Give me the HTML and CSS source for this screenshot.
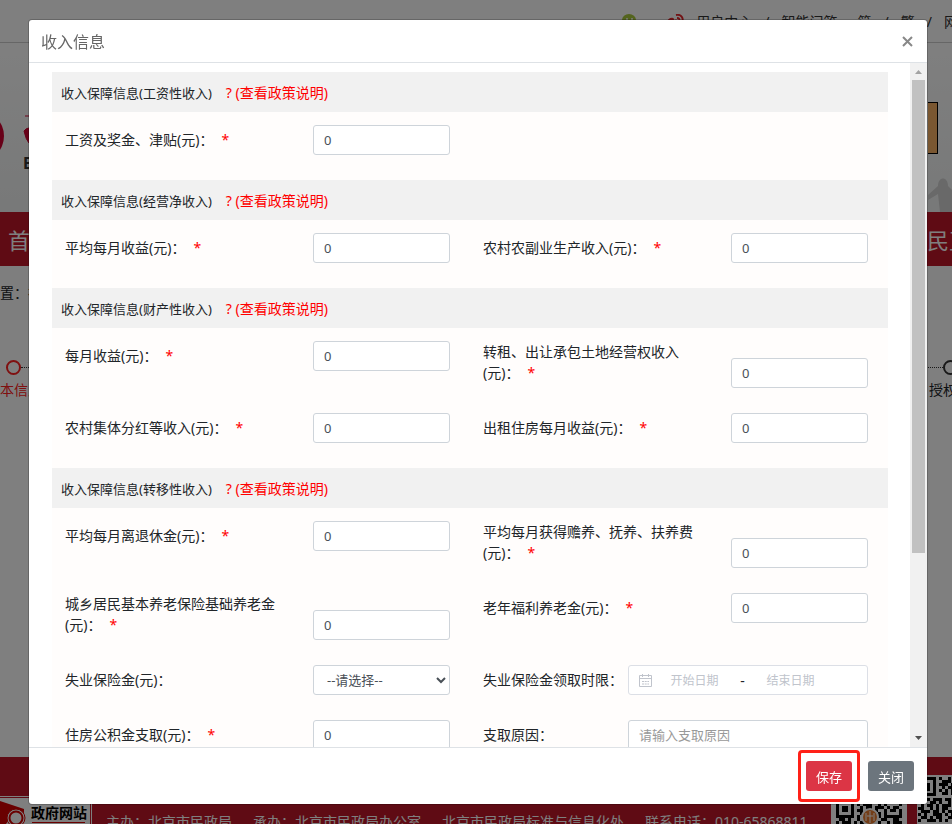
FILE: index.html
```html
<!DOCTYPE html>
<html lang="zh-CN">
  <head>
    <meta charset="UTF-8" />
    <meta name="viewport" content="width=device-width, initial-scale=1.0" />
    <title>收入信息</title>
    <link rel="stylesheet" href="styles.css">
  </head>
  <body>
    <div class="page">
      <div class="topbar">
        <svg class="wechat" width="16" height="14" viewBox="0 0 16 14">
          <ellipse cx="7" cy="6" rx="7" ry="6" fill="#a9c83c" />
          <ellipse cx="12" cy="10" rx="4" ry="4" fill="#a9c83c" />
          <circle cx="5" cy="5" r="1" fill="#fff" />
          <circle cx="10" cy="5" r="1" fill="#fff" />
        </svg>
        <svg width="19" height="14" viewBox="0 0 19 14">
          <path d="M1 9C2 5 6 3 8 4c1 0 1 1 1 2 3-1 5 0 4 2 3 1 2 6-5 6S0 12 1 9z" fill="#e6262b" />
          <path d="M11 1c5-1 8 3 6 7M12 4c2 0 3 1 2 3" fill="none" stroke="#e6262b" stroke-width="2" />
        </svg>
        <a href="#">用户中心</a><span>/</span><a href="#">智能问答</a>
        <a href="#" class="lang">简</a><span>/</span><a href="#">繁</a><span>/</span>
        <a href="#" class="cut-link">网站</a>
      </div>
      <div class="banner">
        <svg width="29" height="169" viewBox="0 0 29 169">
          <circle cx="-22" cy="93" r="26" fill="#d00030" />
          <path d="M25 73h4M24 88q2-3 5-3v15q-3-3-5-12z" fill="#d00030" stroke="#d00030" />
          <text x="23" y="126" class="logo-text">B</text>
        </svg>
        <div class="banner-right">
          <div class="banner-button"></div>
          <svg width="24" height="42" viewBox="0 0 24 42">
            <path d="M0 25l10-9c0-10 10-10 10 0l4 4v22H12l-2-18-10 6z" fill="#d2d2d2" />
          </svg>
        </div>
      </div>
      <div class="nav">
        <a href="#">首</a>
        <a href="#" class="nav-last">民互动</a>
      </div>
      <div class="crumb">置：社</div>
      <div class="steps">
        <div class="step-line">
          <i class="dot dot-red"></i><i class="dots"></i><i class="dot dot-last"></i>
        </div>
        <div class="step-names">
          <span class="step-on">本信息</span>
          <span class="step-last">授权</span>
        </div>
      </div>
      <div class="footer">
        <svg class="gov" width="92" height="28" viewBox="0 0 92 28">
          <path d="M0 0H92V28H0z" fill="#fff" />
          <path d="M0 1.5H90.500V28" fill="none" stroke="#be1628" />
          <path d="M0 5L24 13v4L15 15 6 28H0z" fill="#d40000" />
          <circle cx="16" cy="22" r="9" fill="#fff" stroke="#d40000" stroke-width="1" />
          <circle cx="16" cy="22" r="6.500" fill="none" stroke="#d40000" stroke-width="2" />
          <path d="M32 26.500H85" stroke="#d40000" />
          <text x="31" y="22" class="gov-text">政府网站</text>
        </svg>
        <div class="footer-text">
          <span>主办：北京市民政局</span>
          <span>承办：北京市民政局办公室</span>
          <span>北京市民政局标准与信息化处</span>
          <span>联系电话：010-65868811</span>
        </div>
        <svg class="qr" width="76" height="28" viewBox="0 0 76 28">
          <path d="M0 0H76V28H0z" fill="#fff" />
          <g stroke="#000" stroke-width="3" shape-rendering="crispEdges">
            <path d="M5 5.500H71" stroke-dasharray="18 3 3 6 6 3 3 3 3 18" />
            <path d="M5 8.500H71" stroke-dasharray="3 12 3 3 3 3 9 6 3 3 3 12 3" />
            <path d="M5 11.500H71" stroke-dasharray="3 3 6 3 3 6 3 3 6 3 9 3 3 3 6 3 3" />
            <path d="M5 14.500H71" stroke-dasharray="3 3 6 3 3 3 6 3 3 6 3 6 3 3 6 3 3" />
            <path d="M5 17.500H71" stroke-dasharray="3 12 3 6 6 3 3 6 3 3 3 12 3" />
            <path d="M5 20.500H71" stroke-dasharray="18 3 3 3 3 3 6 3 3 3 18 3" />
            <path d="M8 23.500H71" stroke-dasharray="6 3 3 6 3 3 9 3 3 3 6 6" />
            <path d="M5 26.500H71" stroke-dasharray="3 3 9 3 3 3 6 6 3 3 3 6" />
          </g>
          <circle cx="39" cy="21" r="9" fill="#fff" />
          <circle cx="39" cy="21" r="7" fill="#e67b2e" />
          <path d="M35 17v8M39 15v12M43 17v8M36 20h6" stroke="#fff" stroke-width="1" />
        </svg>
        <svg class="qr-last" width="35" height="49" viewBox="0 0 35 49">
          <path d="M0 0H35V49H0z" fill="#fff" />
          <path d="M0 3.500H17.500V19.500H0" fill="none" stroke="#000" stroke-width="3" />
          <path d="M5 8h8v8H5z" />
          <g stroke="#000" stroke-width="3" shape-rendering="crispEdges">
            <path d="M22 3.500H35" stroke-dasharray="3 6 3" />
            <path d="M25 6.500H35" stroke-dasharray="9 3" />
            <path d="M22 9.500H35" stroke-dasharray="9 3 3" />
            <path d="M25 12.500H35" stroke-dasharray="3 3 6" />
            <path d="M22 15.500H35" stroke-dasharray="3 3 3 3" />
            <path d="M25 18.500H35" stroke-dasharray="6 3" />
            <path d="M10 24.500H35" stroke-dasharray="3 3 9 3 6 3" />
            <path d="M13 27.500H35" stroke-dasharray="6 3 3 6 3" />
            <path d="M4 30.500H35" stroke-dasharray="3 3 6 3 3 3 9" />
            <path d="M1 33.500H35" stroke-dasharray="6 6 3 3 3 3 6" />
            <path d="M4 36.500H35" stroke-dasharray="9 3 6 3 3 3" />
            <path d="M1 39.500H35" stroke-dasharray="3 3 3 6 9 3" />
            <path d="M4 42.500H35" stroke-dasharray="6 3 3 3 6 6" />
            <path d="M1 45.500H35" stroke-dasharray="3 6 9 3 3 3" />
          </g>
        </svg>
      </div>
    </div>

    <div class="mask">
      <form class="modal">
        <div class="modal-header">
          <h1>收入信息</h1>
          <button type="button" class="close" aria-label="关闭窗口">
            <svg width="11" height="11" viewBox="0 0 11 11">
              <path d="M1 1l9 9M10 1l-9 9" stroke="#888" stroke-width="2" />
            </svg>
          </button>
        </div>

        <div class="modal-body">
          <div class="content">
            <!-- 工资性收入 -->
            <div class="section-head">
              <h2>收入保障信息(工资性收入)</h2>
              <a href="#">? (查看政策说明)</a>
            </div>
            <div class="section">
              <div class="row">
                <div class="cell">
                  <label for="wage">工资及奖金、津贴(元)：<em>*</em></label>
                  <input id="wage" type="text" value="0">
                </div>
              </div>
            </div>

            <!-- 经营净收入 -->
            <div class="section-head">
              <h2>收入保障信息(经营净收入)</h2>
              <a href="#">? (查看政策说明)</a>
            </div>
            <div class="section">
              <div class="row">
                <div class="cell">
                  <label for="business">平均每月收益(元)：<em>*</em></label>
                  <input id="business" type="text" value="0">
                </div>
                <div class="cell">
                  <label for="farm">农村农副业生产收入(元)：<em>*</em></label>
                  <input id="farm" type="text" value="0">
                </div>
              </div>
            </div>

            <!-- 财产性收入 -->
            <div class="section-head">
              <h2>收入保障信息(财产性收入)</h2>
              <a href="#">? (查看政策说明)</a>
            </div>
            <div class="section">
              <div class="row">
                <div class="cell">
                  <label for="property">每月收益(元)：<em>*</em></label>
                  <input id="property" type="text" value="0">
                </div>
                <div class="cell">
                  <label for="land">转租、出让承包土地经营权收入(元)：<em>*</em></label>
                  <input id="land" type="text" value="0">
                </div>
              </div>
              <div class="row">
                <div class="cell">
                  <label for="bonus">农村集体分红等收入(元)：<em>*</em></label>
                  <input id="bonus" type="text" value="0">
                </div>
                <div class="cell">
                  <label for="house">出租住房每月收益(元)：<em>*</em></label>
                  <input id="house" type="text" value="0">
                </div>
              </div>
            </div>

            <!-- 转移性收入 -->
            <div class="section-head">
              <h2>收入保障信息(转移性收入)</h2>
              <a href="#">? (查看政策说明)</a>
            </div>
            <div class="section">
              <div class="row">
                <div class="cell">
                  <label for="retire">平均每月离退休金(元)：<em>*</em></label>
                  <input id="retire" type="text" value="0">
                </div>
                <div class="cell">
                  <label for="support">平均每月获得赡养、抚养、扶养费(元)：<em>*</em></label>
                  <input id="support" type="text" value="0">
                </div>
              </div>
              <div class="row">
                <div class="cell">
                  <label for="pension">城乡居民基本养老保险基础养老金(元)：<em>*</em></label>
                  <input id="pension" type="text" value="0">
                </div>
                <div class="cell">
                  <label for="welfare">老年福利养老金(元)：<em>*</em></label>
                  <input id="welfare" type="text" value="0">
                </div>
              </div>
              <div class="row">
                <div class="cell">
                  <label for="unemployed">失业保险金(元)：</label>
                  <select id="unemployed">
                    <option>--请选择--</option>
                  </select>
                </div>
                <div class="cell cell-wide">
                  <label for="start">失业保险金领取时限：</label>
                  <div class="date-range">
                    <svg width="13" height="13" viewBox="0 0 13 13" fill="none" stroke="#c0c4cc">
                      <path d="M.5 1.500h12v11H.5zM.5 4.500h12M3.500 0v3M9.500 0v3" />
                      <path d="M3 7.500h7M3 10h7" stroke-dasharray="2 .7" />
                    </svg>
                    <input id="start" type="text" placeholder="开始日期">
                    <span>-</span>
                    <input type="text" placeholder="结束日期" aria-label="结束日期">
                  </div>
                </div>
              </div>
              <div class="row">
                <div class="cell">
                  <label for="fund">住房公积金支取(元)：<em>*</em></label>
                  <input id="fund" type="text" value="0">
                </div>
                <div class="cell cell-wide">
                  <label for="reason">支取原因：</label>
                  <input id="reason" type="text" placeholder="请输入支取原因">
                </div>
              </div>
            </div>
          </div>
          <div class="scrollbar">
            <svg width="17" height="17" viewBox="0 0 17 17"><path d="M5 11h7L8.500 7z" fill="#a3a3a3" /></svg>
            <div class="thumb"></div>
            <div class="track"></div>
            <svg width="17" height="17" viewBox="0 0 17 17"><path d="M5 6h7l-3.500 4z" fill="#505050" /></svg>
          </div>
        </div>

        <div class="modal-footer">
          <div class="save-mark"><button type="button" class="btn btn-save">保存</button></div>
          <button type="button" class="btn btn-close">关闭</button>
        </div>
      </form>
    </div>
  </body>
</html>
```

FILE: styles.css
```css
* {
  box-sizing: border-box;
}
body {
  margin: 0;
  font-family: "Noto Sans", "Noto Sans CJK SC", sans-serif;
  font-size: 14px;
  color: #212529;
  overflow: hidden;
}
a {
  color: inherit;
  text-decoration: none;
}
input,
select,
button {
  font-family: inherit;
}

/* page behind the dialog */
.page {
  display: flex;
  flex-direction: column;
  height: 100vh;
  overflow: hidden;
}
.topbar {
  flex: none;
  display: flex;
  justify-content: flex-end;
  align-items: center;
  gap: 12px;
  height: 43px;
  border-bottom: 1px solid #ccc;
  color: #333;
}
.wechat {
  margin-right: 15px;
}
.lang {
  margin-left: 8px;
}
.cut-link {
  width: 8px;
  white-space: nowrap;
}
.banner {
  flex: none;
  display: flex;
  justify-content: space-between;
  height: 169px;
  background: linear-gradient(#fff, #f0f2f2);
}
.logo-text {
  font-size: 16px;
  font-weight: bold;
  fill: #333;
}
.banner-right {
  display: flex;
  flex-direction: column;
  justify-content: space-between;
  width: 24px;
  padding-top: 59px;
}
.banner-button {
  width: 10px;
  height: 52px;
  background: #f5ae62;
  border: 1px solid #000;
  border-left: 0;
}
.nav {
  flex: none;
  display: flex;
  justify-content: space-between;
  align-items: center;
  height: 54px;
  padding-left: 8px;
  background: #be1628;
  color: #fff;
  font-size: 22px;
}
.nav-last {
  width: 25px;
  white-space: nowrap;
}
.crumb {
  flex: none;
  height: 54px;
  line-height: 54px;
  background: #fcfcfc;
}
.steps {
  flex: 1;
  padding-top: 40px;
}
.step-line {
  display: flex;
  align-items: center;
  padding-left: 6px;
}
.dot {
  flex: none;
  width: 15px;
  height: 15px;
  border: 2px solid #333;
  border-radius: 50%;
}
.dot-red {
  border-color: #ff2020;
}
.dot-last {
  margin-right: -6px;
}
.dots {
  flex: 1;
  border-top: 1px dotted #333;
}
.step-names {
  display: flex;
  justify-content: space-between;
  padding-top: 4px;
}
.step-on {
  color: #ff2020;
}
.step-last {
  width: 23px;
  white-space: nowrap;
}
.footer {
  flex: none;
  display: flex;
  align-items: flex-end;
  height: 67px;
  background: #be1628;
  color: #fff;
  overflow: hidden;
}
.gov-text {
  font-size: 14px;
  font-weight: bold;
}
.footer-text {
  display: flex;
  gap: 21px;
  height: 14px;
  padding-left: 14px;
  line-height: 24px;
  white-space: nowrap;
}
.qr {
  flex: none;
  margin-left: auto;
  margin-right: 10px;
}
.qr-last {
  flex: none;
}

/* dialog */
.mask {
  position: fixed;
  inset: 0;
  padding: 20px 25px 20px 29px;
  background: rgba(0, 0, 0, 0.5);
}
.modal {
  display: flex;
  flex-direction: column;
  height: 100%;
  background: #fff;
  border-radius: 3px;
  box-shadow: 0 0 0 1px rgba(0, 0, 0, 0.2);
}
.modal-header {
  flex: none;
  display: flex;
  justify-content: space-between;
  align-items: center;
  height: 43px;
  padding: 0 14px 0 12px;
  border-bottom: 1px solid #dee2e6;
}
.modal-header h1 {
  margin: 0;
  font-size: 16px;
  font-weight: normal;
  color: #666;
}
.close {
  display: flex;
  padding: 0;
  border: 0;
  background: none;
}
.modal-body {
  flex: 1;
  display: flex;
  min-height: 0;
}
.content {
  flex: 1;
  padding: 9px 22px 0 23px;
  overflow: hidden;
}
.section-head {
  display: flex;
  align-items: center;
  gap: 14px;
  height: 40px;
  padding-left: 9px;
  background: #f1f1f1;
}
.section-head h2 {
  margin: 0;
  font-size: 13px;
  font-weight: normal;
}
.section-head a {
  color: #f00;
}
.section {
  padding-top: 13px;
  background: #fffdfc;
}
.row {
  display: grid;
  grid-template-columns: 1fr 1fr;
  align-items: start;
  padding-bottom: 25px;
}
.cell {
  display: flex;
  align-items: flex-end;
  padding: 0 20px 0 13px;
}
.cell label {
  flex: 1;
  padding: 0 30px 5px 0;
  line-height: 21px;
}
.cell em {
  margin-left: 8px;
  color: #f00;
  font-style: normal;
}
.cell > input,
.cell > select {
  width: 137px;
  height: 30px;
  padding: 0 10px;
  border: 1px solid #ced4da;
  border-radius: 3px;
  background: #fff;
  color: #495057;
  font-size: 13px;
}
.cell > select {
  padding: 0 0 0 9px;
}
.cell-wide label {
  padding-right: 0;
  white-space: nowrap;
}
.cell-wide > input,
.date-range {
  width: 240px;
}
.cell > input::placeholder {
  color: #999;
}
.cell-wide > input {
  width: 240px;
}
.date-range {
  display: flex;
  align-items: center;
  height: 30px;
  padding: 0 10px;
  border: 1px solid #dcdfe6;
  border-radius: 3px;
  background: #fff;
}
.date-range input {
  width: 39%;
  padding: 0;
  border: 0;
  background: none;
  font-size: 12px;
  text-align: center;
}
.date-range input::placeholder {
  color: #c0c4cc;
}
.date-range span {
  width: 5%;
  text-align: center;
}
.scrollbar {
  flex: none;
  display: flex;
  flex-direction: column;
  width: 17px;
  background: #f1f1f1;
}
.thumb {
  flex: 8;
  margin: 0 2px;
  background: #c1c1c1;
}
.track {
  flex: 3;
}
.modal-footer {
  flex: none;
  display: flex;
  justify-content: flex-end;
  align-items: center;
  gap: 8px;
  height: 57px;
  padding-right: 13px;
  border-top: 1px solid #dee2e6;
}
.save-mark {
  padding: 8px 5px;
  border: 3px solid #ff2118;
  border-radius: 4px;
}
.btn {
  display: block;
  width: 46px;
  height: 30px;
  padding: 0;
  border: 0;
  border-radius: 3px;
  color: #fff;
  font-size: 13px;
}
.btn-save {
  background: #dc3545;
}
.btn-close {
  background: #6c757d;
}
```
